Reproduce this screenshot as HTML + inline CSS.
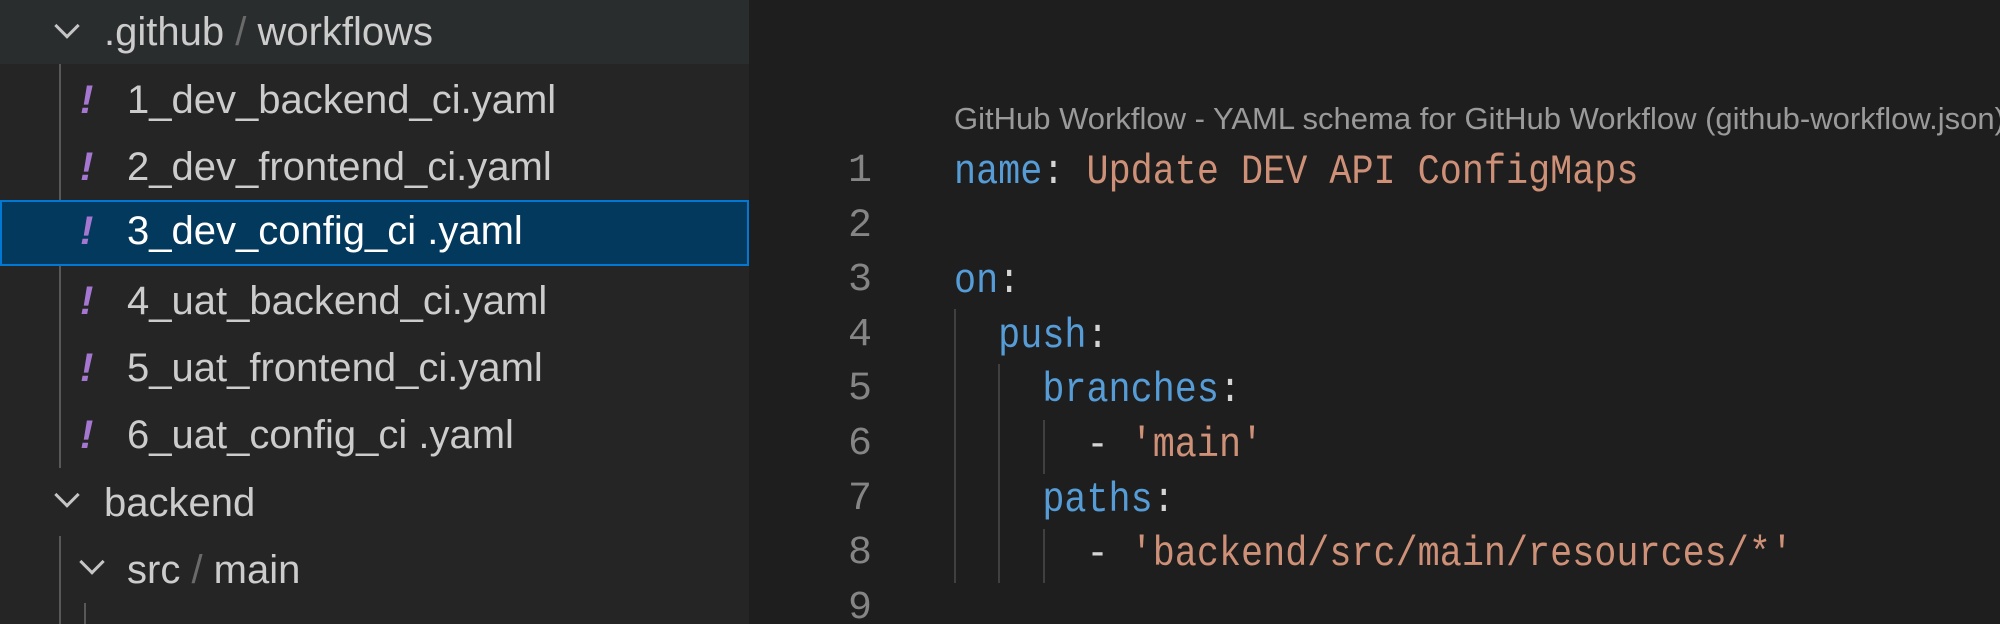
<!DOCTYPE html>
<html style="width:2000px;height:624px;overflow:hidden"><head><meta charset="utf-8"><style>
*{margin:0;padding:0;box-sizing:border-box}
body{width:2000px;height:624px;overflow:hidden;background:#1e1e1e;position:relative;font-family:"Liberation Sans",sans-serif}
#side{position:absolute;left:0;top:0;width:749px;height:624px;background:#252526;overflow:hidden}
.hdr{position:absolute;left:0;top:0;width:749px;height:64px;background:#2a2d2e}
.row{position:absolute;left:0;height:67px;width:749px;font-size:40px;color:#cccccc;line-height:67px;white-space:nowrap}
.row .t{position:absolute;left:127px;top:0}
.row .f{position:absolute;left:104px;top:0}
.sel{background:#04395e;border:2px solid #0078d4;color:#fff}
.ex{position:absolute;left:80px;top:0;color:#a577d0;font-style:italic;font-weight:bold;font-size:40px}
.sl{color:#6a6a6a}
.chev{position:absolute;width:18px;height:18px;border-right:3px solid #c5c5c5;border-bottom:3px solid #c5c5c5;transform:rotate(45deg)}
.g{position:absolute;width:2px;background:#585858}
.eg{position:absolute;width:2px;background:#404040}
.code{position:absolute;font-family:"Liberation Mono",monospace;font-size:42px;color:#d4d4d4;white-space:pre;line-height:54.6px;transform:scaleX(0.876);transform-origin:0 0}
.ln{position:absolute;width:72px;text-align:right;font-family:"Liberation Mono",monospace;font-size:40px;color:#858585;line-height:54.6px;height:479px;overflow:hidden}
.k{color:#569cd6}.s{color:#ce9178}
#ed{position:absolute;left:749px;top:0;width:1251px;height:624px;overflow:hidden}
</style></head><body>
<div id="side">
<div class="hdr"></div>
<div class="chev" style="left:58px;top:17px"></div>
<div class="row" style="top:0;height:64px;line-height:64px"><span class="f">.github<span class="sl"> / </span>workflows</span></div>
<div class="g" style="left:59px;top:64px;height:404px"></div>
<div class="row" style="top:67px"><span class="ex">!</span><span class="t">1_dev_backend_ci.yaml</span></div>
<div class="row" style="top:134px"><span class="ex">!</span><span class="t">2_dev_frontend_ci.yaml</span></div>
<div class="row sel" style="top:200px;height:66px;line-height:62px"><span class="ex" style="top:-2px;left:78px">!</span><span class="t" style="top:-2px;left:125px">3_dev_config_ci .yaml</span></div>
<div class="row" style="top:268px"><span class="ex">!</span><span class="t">4_uat_backend_ci.yaml</span></div>
<div class="row" style="top:335px"><span class="ex">!</span><span class="t">5_uat_frontend_ci.yaml</span></div>
<div class="row" style="top:402px"><span class="ex">!</span><span class="t">6_uat_config_ci .yaml</span></div>
<div class="chev" style="left:58px;top:486px"></div>
<div class="row" style="top:470px"><span class="f">backend</span></div>
<div class="g" style="left:59px;top:536px;height:88px"></div>
<div class="chev" style="left:83px;top:553px"></div>
<div class="row" style="top:537px"><span class="t">src<span class="sl"> / </span>main</span></div>
<div class="g" style="left:84px;top:603px;height:21px"></div>
</div>
<div id="ed">
<div style="position:absolute;left:205px;top:101px;font-size:31px;color:#9a9a9a;white-space:nowrap">GitHub Workflow - YAML schema for GitHub Workflow (github-workflow.json)</div>
<div class="ln" style="top:145px;left:51px">1<br>2<br>3<br>4<br>5<br>6<br>7<br>8<br>9</div>
<div class="eg" style="left:205px;top:309px;height:274px"></div>
<div class="eg" style="left:249px;top:364px;height:219px"></div>
<div class="eg" style="left:294px;top:420px;height:54px"></div>
<div class="eg" style="left:294px;top:529px;height:54px"></div>
<div class="code" style="top:145px;left:205px"><span class="k">name</span>: <span class="s">Update DEV API ConfigMaps</span>

<span class="k">on</span>:
  <span class="k">push</span>:
    <span class="k">branches</span>:
      - <span class="s">'main'</span>
    <span class="k">paths</span>:
      - <span class="s">'backend/src/main/resources/*'</span></div>
</div>
</body></html>
